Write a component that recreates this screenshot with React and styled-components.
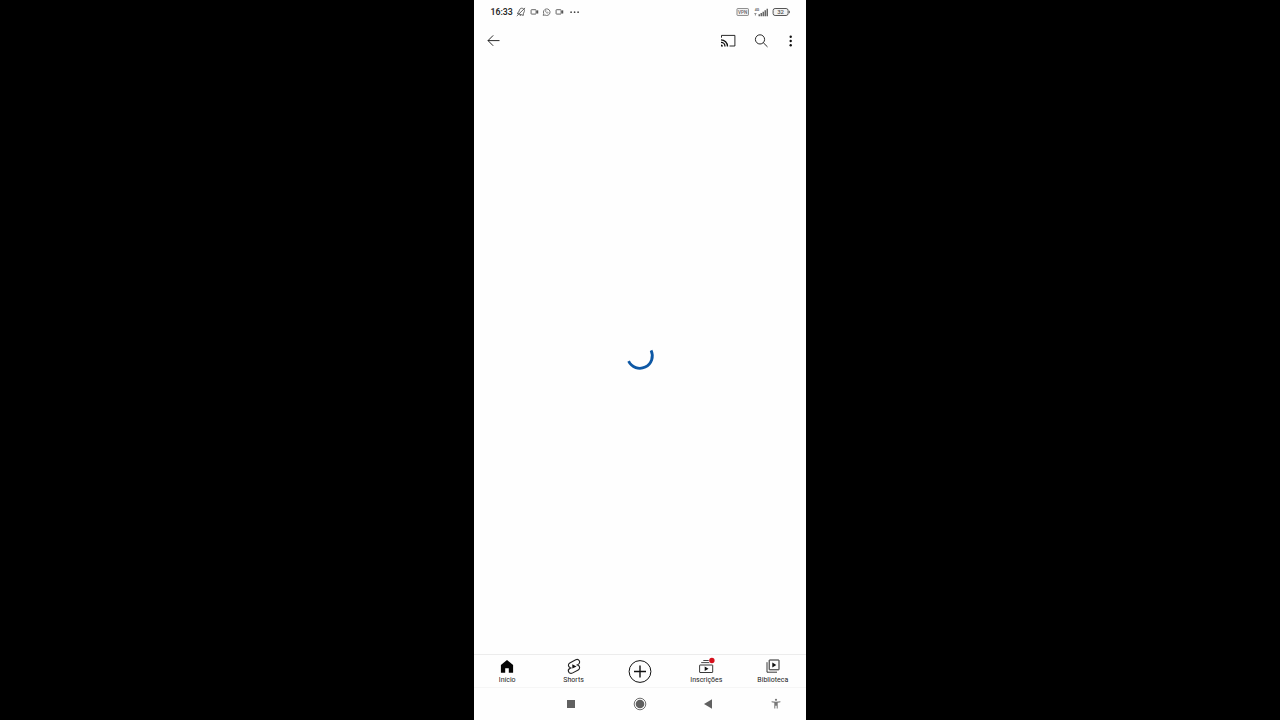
import React from "react";
import styled, { createGlobalStyle } from "styled-components";

const GlobalStyle = createGlobalStyle`
  * { box-sizing: border-box; }
  body { margin: 0; background: #000; font-family: Roboto, "Liberation Sans", sans-serif; }
  svg { display: block; flex: none; overflow: visible; }
`;

const Stage = styled.div`
  display: flex;
  justify-content: center;
  width: 100%;
  height: 100vh;
  background: #000;
`;

const Phone = styled.main`
  display: flex;
  flex-direction: column;
  width: 332px;
  height: 720px;
  background: #fefefe;
  color: #0f0f0f;
`;

const StatusBar = styled.header`
  display: flex;
  align-items: center;
  justify-content: space-between;
  height: 24px;
  padding: 0 16px 0 16.5px;
`;

const StatusGroup = styled.div`
  display: flex;
  align-items: center;
  gap: ${(p) => p.$gap}px;
`;

const Clock = styled.time`
  width: 22px;
  margin-right: -1px;
  font-size: 8.7px;
  line-height: 12px;
  font-weight: 600;
  white-space: nowrap;
  color: #2b2b2b;
`;

const AppBar = styled.nav`
  display: flex;
  align-items: center;
  justify-content: space-between;
  height: 33px;
  padding: 0 13px 1px 13px;
`;

const Actions = styled.div`
  display: flex;
  align-items: center;
`;

const IconButton = styled.button`
  display: flex;
  align-items: center;
  justify-content: center;
  width: ${(p) => p.$width || 14}px;
  height: 16px;
  margin-left: ${(p) => p.$offset || 0}px;
  padding: 0;
  border: 0;
  background: none;
  color: #111;
`;

const Content = styled.section`
  display: flex;
  flex: 1;
  align-items: center;
  justify-content: center;
  padding-top: 2px;
`;

const TabBar = styled.nav`
  display: grid;
  grid-template-columns: repeat(5, 1fr);
  height: 34px;
  border-top: 1px solid #ececec;
  border-bottom: 1px solid #f6f6f6;
`;

const Tab = styled.a`
  display: flex;
  flex-direction: column;
  align-items: center;
  padding-top: 4px;
  color: #0f0f0f;
`;

const TabLabel = styled.span`
  margin-top: 2px;
  font-size: 7px;
  line-height: 9px;
  white-space: nowrap;
  color: #222;
`;

const SystemBar = styled.footer`
  display: grid;
  grid-template-columns: 63px 68px 70px 66px 65px;
  justify-items: center;
  align-items: center;
  height: 32px;
  color: #606060;
`;

const SystemKey = styled.div`
  display: flex;
  grid-column: ${(p) => p.$column};
  padding-left: ${(p) => p.$inset || 0}px;
`;

function Camera() {
  return (
    <svg width="8" height="8" viewBox="0 0 8 8" fill="none" stroke="#555" strokeWidth=".9">
      <rect x=".1" y="1.7" width="5" height="4.4" rx=".5" />
      <path d="M5.4 3.3 7 2.4v3.1L5.4 4.6" fill="#555" strokeWidth=".5" />
    </svg>
  );
}

function BellOff() {
  return (
    <svg width="10" height="10" viewBox="0 0 10 10" fill="none" stroke="#555" strokeWidth=".9">
      <path d="M1.2 6.3 7.3 8.4 7.3 6.8 8.3 4.4C8.8 2.9 8.1 1.9 6.7 1.4S4.1 1.4 3.5 2.9L2.6 5.2Z M3.4 7.8l1.6.7M.8 9 9.1.9" />
    </svg>
  );
}

function Chat() {
  return (
    <svg width="8" height="8" viewBox="0 0 8 8" fill="none" stroke="#666" strokeWidth=".9">
      <path d="m.2 7.4.5-1.9A3.3 3.3 0 1 1 2 7Z" />
      <path d="M2.3 2.4c-.2 1.6 1.2 3 2.8 2.8l.2-.7-.9-.4-.5.4-1-1 .4-.5-.4-.8Z" strokeWidth=".5" />
    </svg>
  );
}

function Vpn() {
  return (
    <svg width="13" height="8" viewBox="-.5 0 13 8">
      <rect x=".5" y=".6" width="11.4" height="6.8" rx=".6" fill="none" stroke="#777" strokeWidth=".9" />
      <text x="6.2" y="5.7" textAnchor="middle" fontSize="4.6" fontWeight="600" fill="#666">VPN</text>
    </svg>
  );
}

function Signal() {
  return (
    <svg width="15" height="9" viewBox="-.7 0 15 9" fill="#666">
      <text x="1" y="3.2" fontSize="3.6" fontWeight="700">4G</text>
      <path d="M1.2 5h1v2.6h-1zM.5 5h2.4v.8H.5z" fillOpacity=".75" />
      <path d="M4.8 6.3h1.5V8.2H4.8zM6.8 5h1.5v3.2H6.8zM8.8 3.7h1.5v4.5H8.8zM10.8 2.3h1.5v5.9h-1.5zM12.8 .8h1.5v7.4h-1.5z" />
    </svg>
  );
}

function Battery() {
  return (
    <svg width="18" height="9" viewBox="-.5 .4 18 9">
      <rect x=".6" y=".9" width="15" height="7" rx="2" fill="#f3f3f3" stroke="#555" />
      <path d="M16.8 3.2v2.4" stroke="#555" />
      <text x="8.1" y="6.5" textAnchor="middle" fontSize="6" fontWeight="500" fill="#555">32</text>
    </svg>
  );
}

function Home() {
  return (
    <svg width="14" height="15" viewBox="0 0 14 15">
      <path d="M7 .9.9 6v7.7h4.3V9.3h3.6v4.4h4.3V6Z" fill="#050505" />
    </svg>
  );
}

function Shorts() {
  return (
    <svg width="14" height="15" viewBox="2 1.4 20 21.4">
      <path
        d="m17.77 10.32-1.2-.5L18 9.06c1.84-.96 2.53-3.23 1.56-5.06s-3.24-2.53-5.07-1.56L6 6.94c-1.29.68-2.07 2.04-2 3.49.07 1.42.93 2.67 2.22 3.25l1.2.5L6 14.93c-1.83.97-2.53 3.24-1.56 5.07s3.24 2.53 5.07 1.56l8.5-4.5c1.29-.68 2.06-2.04 1.99-3.49-.07-1.42-.94-2.68-2.23-3.25Z"
        fill="none"
        stroke="#222"
        strokeWidth="1.6"
      />
      <path d="M9.6 15V9l6 3Z" fill="#111" />
    </svg>
  );
}

function Create() {
  return (
    <svg width="24" height="24" viewBox="0 -.5 24 24" fill="none" stroke="#111">
      <circle cx="12" cy="12" r="10.9" strokeWidth="1" />
      <path d="M12 6v12M6 12h12" strokeWidth="1.4" />
    </svg>
  );
}

function Subscriptions() {
  return (
    <svg width="16" height="15" viewBox="0 0 16 15">
      <path d="M5.3 1.5h6M3.2 3.6h9" fill="none" stroke="#333" strokeWidth=".9" />
      <rect x="1.6" y="6" width="13.1" height="7.5" rx=".4" fill="none" stroke="#222" strokeWidth=".9" />
      <path d="M6.7 7.5v4.6l3.8-2.3Z" fill="#111" />
      <circle cx="13.9" cy="1.5" r="3.2" fill="#fefefe" />
      <circle cx="13.9" cy="1.5" r="2.7" fill="#d5101c" />
    </svg>
  );
}

function Library() {
  return (
    <svg width="14" height="15" viewBox="0 0 14 15" fill="none" stroke="#222" strokeWidth="1">
      <rect x="3.2" y="1" width="9.8" height="9.8" rx=".3" />
      <path d="M1 3.2v10h10" strokeWidth=".9" />
      <path d="M6.3 3.4v5l4-2.5Z" fill="#111" stroke="none" />
    </svg>
  );
}

const tabs = [
  { label: "Início", icon: <Home /> },
  { label: "Shorts", icon: <Shorts /> },
  { icon: <Create /> },
  { label: "Inscrições", icon: <Subscriptions /> },
  { label: "Biblioteca", icon: <Library /> },
];

export default function App() {
  return (
    <Stage>
      <GlobalStyle />
      <Phone>
        <StatusBar>
          <StatusGroup $gap={4.6}>
            <Clock>16:33</Clock>
            <BellOff />
            <Camera />
            <Chat />
            <Camera />
            <svg width="14" height="8" viewBox="0 0 14 8" fill="#444">
              <circle cx="3.1" cy="4.2" r=".85" />
              <circle cx="6.6" cy="4.2" r=".85" />
              <circle cx="10.1" cy="4.2" r=".85" />
            </svg>
          </StatusGroup>
          <StatusGroup $gap={4}>
            <Vpn />
            <Signal />
            <Battery />
          </StatusGroup>
        </StatusBar>
        <AppBar>
          <IconButton aria-label="Voltar">
            <svg width="14" height="12" viewBox="0 -.6 14 12" fill="none" stroke="currentColor" strokeWidth=".9">
              <path d="M12.5 6H1M6.2.8 1 6l5.2 5.2" />
            </svg>
          </IconButton>
          <Actions>
            <IconButton $width={16} aria-label="Transmitir">
              <svg width="16" height="14" viewBox="0 -.7 16 14" fill="none" stroke="currentColor">
                <path d="M1.5 4V1.7h13.4v10.6H9.5" strokeWidth=".9" />
                <path d="M1 6.2a6.5 6.5 0 0 1 6.5 6.5M1 8.7a4 4 0 0 1 4 4" strokeWidth="1.3" />
                <path d="M1 10.8a2 2 0 0 1 2 2H1Z" fill="currentColor" stroke="none" />
              </svg>
            </IconButton>
            <IconButton $offset={18} aria-label="Pesquisar">
              <svg width="14" height="14" viewBox="0 -.6 14 14" fill="none" stroke="currentColor" strokeWidth=".9">
                <circle cx="6" cy="5.8" r="4.6" />
                <path d="m9.2 9 4.3 4.3" />
              </svg>
            </IconButton>
            <IconButton $width={5} $offset={20} aria-label="Mais opções">
              <svg width="5" height="12" viewBox="0 -.7 5 12" fill="currentColor">
                <circle cx="2.7" cy="2" r="1.2" />
                <circle cx="2.7" cy="6.3" r="1.2" />
                <circle cx="2.7" cy="10.6" r="1.2" />
              </svg>
            </IconButton>
          </Actions>
        </AppBar>
        <Content aria-label="Carregando">
          <svg width="30" height="30" viewBox="0 0 30 30">
            <path d="M26.1 8.4A12.2 12.2 0 0 1 3.6 19.2" fill="none" stroke="#0d58a5" strokeWidth="2.8" />
          </svg>
        </Content>
        <TabBar>
          {tabs.map(({ label, icon }, i) => (
            <Tab key={i}>
              {icon}
              {label && <TabLabel>{label}</TabLabel>}
            </Tab>
          ))}
        </TabBar>
        <SystemBar>
          <SystemKey $column={2}>
            <svg width="8" height="8" viewBox="0 0 8 8" fill="currentColor">
              <rect width="8" height="8" />
            </svg>
          </SystemKey>
          <SystemKey $column={3}>
            <svg width="14" height="14" viewBox="0 0 14 14">
              <circle cx="7" cy="7" r="5.8" fill="none" stroke="currentColor" strokeWidth=".9" />
              <circle cx="7" cy="7" r="4.3" fill="currentColor" />
            </svg>
          </SystemKey>
          <SystemKey $column={4}>
            <svg width="8" height="10" viewBox="0 0 8 10" fill="currentColor">
              <path d="M0 5 8 .2v9.6Z" />
            </svg>
          </SystemKey>
          <SystemKey $column={5} $inset={4}>
            <svg width="10" height="11" viewBox="0 .4 10 11" fill="#777">
              <circle cx="5" cy="1.2" r="1.1" />
              <path d="M.6 2.7 5 3.1l4.4-.4v1l-2.7.4v5.9h-1V7.2H4.3V10h-1V4.1L.6 3.7Z" />
            </svg>
          </SystemKey>
        </SystemBar>
      </Phone>
    </Stage>
  );
}
